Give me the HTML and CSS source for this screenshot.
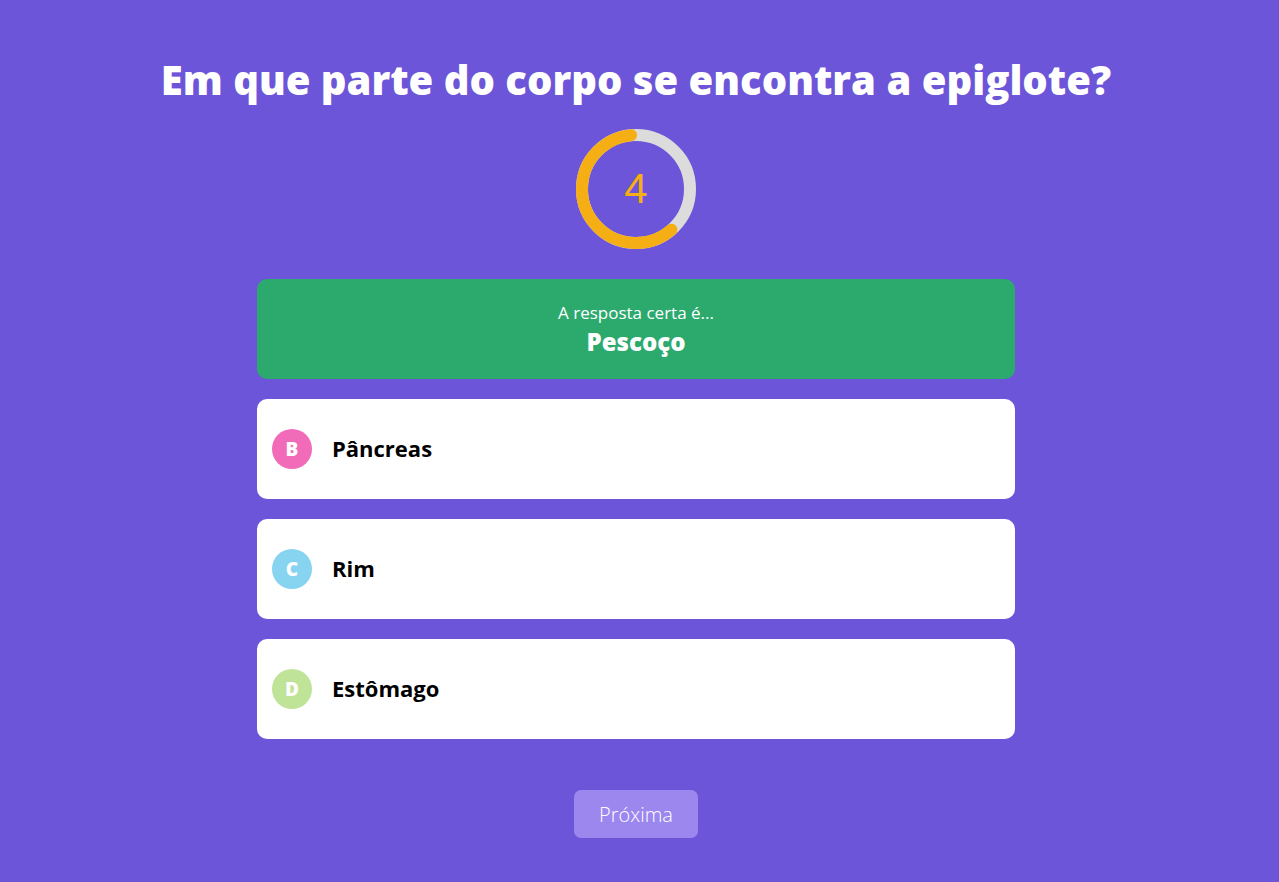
FILE: index.html
```html
<!DOCTYPE html>
<html lang="pt">
<head>
<meta charset="utf-8">
<title>Quiz</title>
<link rel="stylesheet" href="styles.css">
</head>
<body>
<main class="quiz">
  <h1 class="question">Em que parte do corpo se encontra a epiglote?</h1>
  <div class="timer">
    <svg class="ring" width="124" height="124" viewBox="0 0 124 124">
      <circle cx="62" cy="62" r="54" fill="none" stroke="#dcdcdc" stroke-width="12"/>
      <circle cx="62" cy="62" r="54" fill="none" stroke="#f5ae14" stroke-width="12" stroke-linecap="round" stroke-dasharray="203 400" transform="rotate(49 62 62)"/>
    </svg>
    <span class="count">4</span>
  </div>
  <section class="answers">
    <div class="correct">
      <p class="correct-label">A resposta certa é...</p>
      <p class="correct-answer">Pescoço</p>
    </div>
    <div class="option">
      <span class="letter letter-b">B</span>
      <span class="option-text">Pâncreas</span>
    </div>
    <div class="option">
      <span class="letter letter-c">C</span>
      <span class="option-text">Rim</span>
    </div>
    <div class="option">
      <span class="letter letter-d">D</span>
      <span class="option-text">Estômago</span>
    </div>
  </section>
  <button class="next">Próxima</button>
</main>
</body>
</html>
```

FILE: styles.css
```css
html, body {
  margin: 0;
  padding: 0;
}
body {
  background: #6c55d8;
  font-family: "Open Sans", "Noto Sans", sans-serif;
  min-height: 882px;
}
.quiz {
  display: flex;
  flex-direction: column;
  align-items: center;
  padding-top: 54px;
  padding-right: 7px;
}
.question {
  margin: 0;
  color: #fff;
  font-size: 40px;
  font-weight: 800;
  line-height: 52px;
}
.timer {
  position: relative;
  width: 124px;
  height: 124px;
  margin-top: 21px;
}
.ring {
  display: block;
}
.count {
  position: absolute;
  inset: 0;
  display: flex;
  align-items: center;
  justify-content: center;
  color: #f5ae14;
  font-family: "Liberation Sans", Arial, sans-serif;
  font-size: 42px;
  font-weight: 300;
}
.answers {
  width: 758px;
  margin-top: 28px;
  display: flex;
  flex-direction: column;
  gap: 20px;
}
.correct {
  height: 100px;
  box-sizing: border-box;
  background: #2caa6e;
  border-radius: 10px;
  display: flex;
  flex-direction: column;
  align-items: center;
  justify-content: center;
  color: #fff;
}
.correct-label {
  margin: 0;
  font-size: 17px;
  line-height: 22px;
}
.correct-answer {
  margin: 3px 0 0;
  font-size: 24px;
  font-weight: 800;
  line-height: 30px;
}
.option {
  height: 100px;
  background: #fff;
  border-radius: 10px;
  display: flex;
  align-items: center;
  padding-left: 15px;
  gap: 20px;
}
.letter {
  width: 40px;
  height: 40px;
  border-radius: 50%;
  display: flex;
  align-items: center;
  justify-content: center;
  color: #fff;
  font-size: 19px;
  font-weight: 800;
}
.letter-b { background: #f26bb9; }
.letter-c { background: #87d4f1; }
.letter-d { background: #bfe498; }
.option-text {
  color: #000;
  font-size: 22px;
  font-weight: 700;
  line-height: 26px;
  margin-top: -3px;
}
.next {
  margin-top: 51px;
  width: 124px;
  height: 48px;
  border: none;
  border-radius: 7px;
  background: #9b87ee;
  color: #fff;
  font-family: "Open Sans", "Noto Sans", sans-serif;
  font-size: 20px;
  font-weight: 300;
}
```
